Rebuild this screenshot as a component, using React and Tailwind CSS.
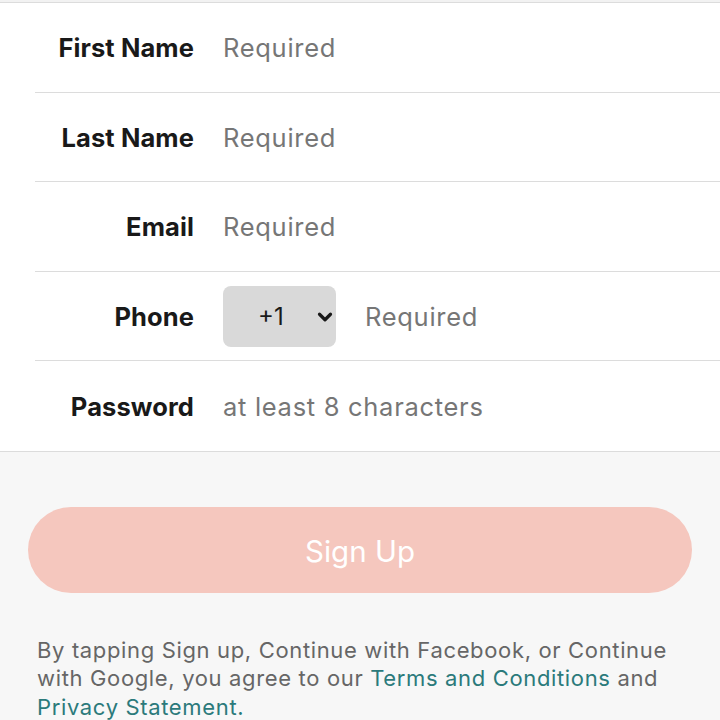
import { ChevronDown } from "lucide-react";

const fields = [
  { label: "First Name", placeholder: "Required" },
  { label: "Last Name", placeholder: "Required" },
  { label: "Email", placeholder: "Required" },
  { label: "Phone", placeholder: "Required", phone: true },
  { label: "Password", placeholder: "at least 8 characters" },
];

export default function App() {
  return (
    <div className="min-h-[720px] bg-[#f7f7f7] font-['Inter',sans-serif]">
      <div className="h-[2px] bg-[#f2f2f2]" />
      <div className="bg-white border-t border-b border-[#dcdcdc]">
        {fields.map((f, i) => (
          <div
            key={f.label}
            className={`ml-[35px] flex items-center h-[89.5px] pt-[2px] ${i < fields.length - 1 ? "border-b border-[#dcdcdc]" : ""}`}
          >
            <div className="w-[159px] shrink-0 text-right text-[25.5px] font-bold text-[#191919] tracking-[0.1px]">
              {f.label}
            </div>
            <div className="ml-[29px] flex items-center">
              {f.phone && (
                <div className="mr-[29px] flex items-center w-[113px] h-[61px] rounded-[8px] bg-[#d9d9d9] pl-[35px] pr-0">
                  <span className="text-[24px] text-[#191919]">+1</span>
                  <ChevronDown className="ml-auto w-[22px] h-[22px] text-[#191919]" strokeWidth={3.5} />
                </div>
              )}
              <span className="text-[25.5px] text-[#767676] tracking-[0.7px]">{f.placeholder}</span>
            </div>
          </div>
        ))}
      </div>
      <div className="px-[28px] pt-[55px]">
        <button className="w-full h-[86px] rounded-full bg-[#f5c7be] text-white text-[29.5px] pt-[3px]">
          Sign Up
        </button>
      </div>
      <p className="pl-[37px] pr-[40px] pt-[43px] text-[22px] leading-[28.7px] text-[#666666] tracking-[0.65px]">
        By tapping Sign up, Continue with Facebook, or Continue with Google, you agree to our{" "}
        <span className="text-[#2b7a7b]">Terms and Conditions</span> and{" "}
        <span className="text-[#2b7a7b]">Privacy Statement.</span>
      </p>
    </div>
  );
}
